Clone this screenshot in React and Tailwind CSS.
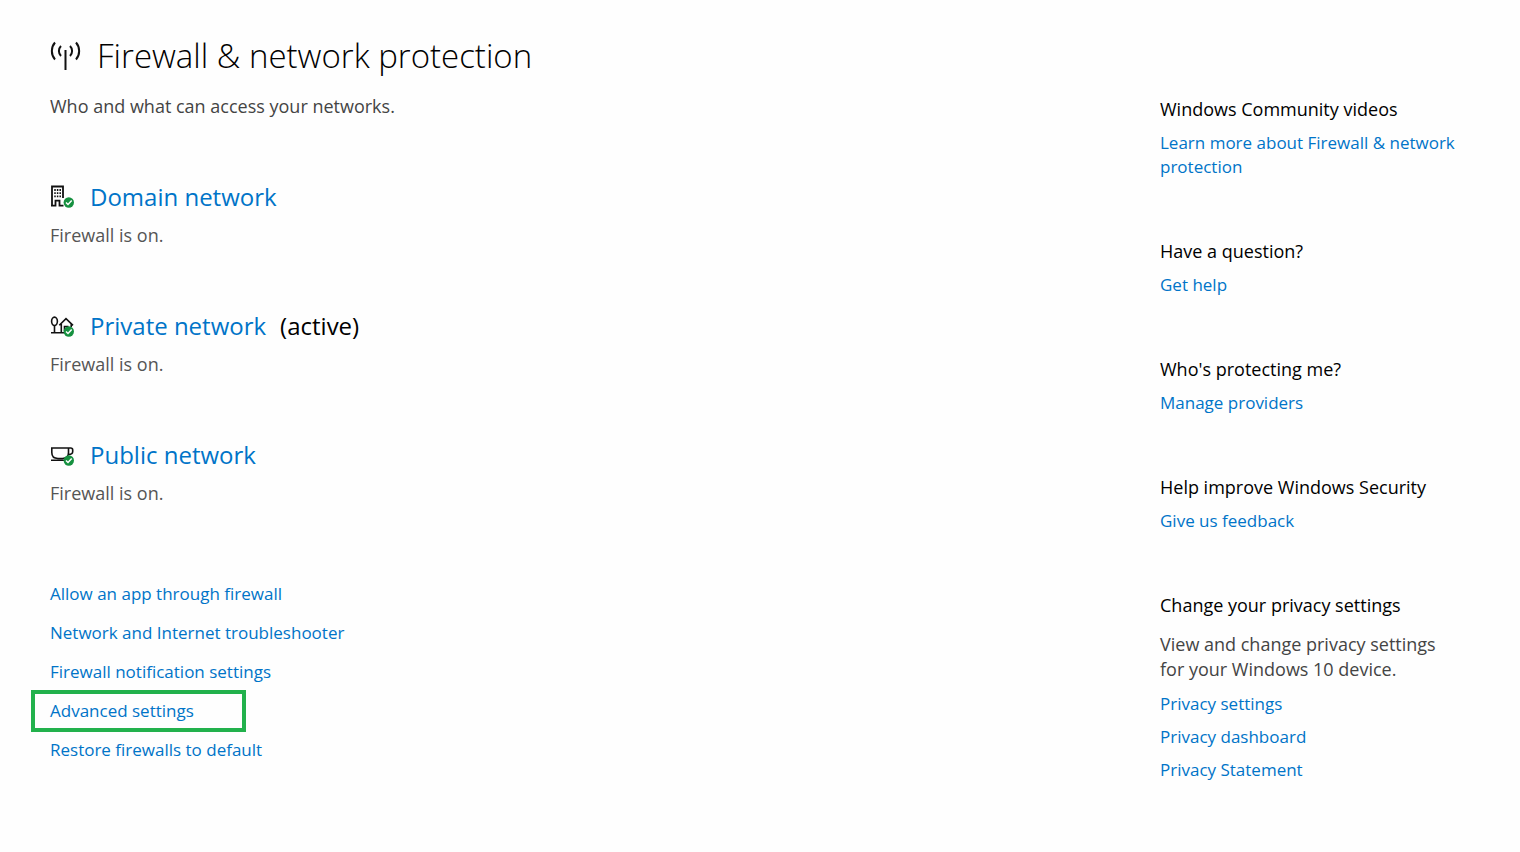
const link = "text-[#0074c8] hover:text-gray-600";

function Check() {
  return (
    <g>
      <circle cx="18.800" cy="17.500" r="5.200" fill="#15903f" stroke="none" />
      <path d="M16 17.500l2 2 3.700-4" fill="none" stroke="#fff" strokeWidth="1.500" />
    </g>
  );
}

function BuildingIcon() {
  return (
    <svg className="size-6" viewBox="0 0 24 24" fill="none" stroke="#111" strokeWidth="1.8" aria-hidden="true">
      <path d="M2 21.500V1.500h11V13M1 20.700h4.500v-5h4v5h4" />
      <path d="M5 4v8.600M7.600 4v8.600M10.200 4v8.600" strokeWidth="1.500" strokeDasharray="1.900 1.300" />
      <Check />
    </svg>
  );
}

function HomeIcon() {
  return (
    <svg className="size-6" viewBox="0 0 24 24" fill="none" stroke="#111" strokeWidth="1.6" aria-hidden="true">
      <path d="M4.500 19v-7.500M1 18.700h14" />
      <ellipse cx="4.500" cy="7.300" rx="2.900" ry="4.200" />
      <path d="M9.300 11.300L16 4.700l7 6.600M11.300 10v8.500M21.200 10v3M14.500 17v-4.500h4" />
      <Check />
    </svg>
  );
}

function CupIcon() {
  return (
    <svg className="size-6" viewBox="0 0 24 24" fill="none" stroke="#111" strokeWidth="1.6" aria-hidden="true">
      <path d="M1.800 5h16.700v4.500c0 4-2.500 6-6 6H8c-3.700 0-6.200-2-6.200-6zM18.500 5h2.200a2 2 0 0 1 2 2v1.500c0 1.800-1.500 3-4.200 3M1 17.300h14" />
      <Check />
    </svg>
  );
}

const networks = [
  { name: "Domain network", Icon: BuildingIcon },
  { name: "Private network", Icon: HomeIcon, active: true },
  { name: "Public network", Icon: CupIcon },
];
const actions = ["Allow an app through firewall", "Network and Internet troubleshooter", "Firewall notification settings", "Advanced settings", "Restore firewalls to default"];
const help = [
  { title: "Windows Community videos", links: ["Learn more about Firewall & network protection"] },
  { title: "Have a question?", links: ["Get help"] },
  { title: "Who's protecting me?", links: ["Manage providers"] },
  { title: "Help improve Windows Security", links: ["Give us feedback"] },
  { title: "Change your privacy settings", text: "View and change privacy settings for your Windows 10 device.", links: ["Privacy settings", "Privacy dashboard", "Privacy Statement"] },
];

export default function App() {
  return (
    <div className="flex min-h-screen justify-between bg-[#fefefe] pl-[50px] pr-[60px] font-['Open_Sans','Noto_Sans',sans-serif] text-[17px] leading-6 text-black">
      <main className="pt-8">
        <h1 className="flex items-center gap-4 text-[33px] leading-[48px] font-light">
          <svg className="h-8 w-[31px]" viewBox="0 0 31 32" fill="none" stroke="#111" strokeWidth="2" aria-hidden="true">
            <path d="M15.500 10v20M11 6a7 7 0 0 0 0 10M20 6a7 7 0 0 1 0 10M5 2.500a13 13 0 0 0 0 17M26 2.500a13 13 0 0 1 0 17" />
          </svg>
          Firewall &amp; network protection
        </h1>
        <p className="mt-[14px] text-lg leading-6 text-[#444]">Who and what can access your networks.</p>
        <div className="mt-[63px] flex flex-col gap-[63px]">
          {networks.map(({ name, Icon, active }) => (
            <section key={name}>
              <h2 className="flex items-center gap-4 text-2xl">
                <Icon />
                <span><a href="#" className={link}>{name}</a>{active && <span className="ml-[14px]">(active)</span>}</span>
              </h2>
              <p className="mt-[10px] text-lg leading-6 text-[#555]">Firewall is on.</p>
            </section>
          ))}
        </div>
        <ul className="mt-[69px]">
          {actions.map((name) => (
            <li key={name} className="flex h-[39px] items-center">
              {name === "Advanced settings" ? (
                <a href="#" className="-ml-[19px] flex h-[42px] w-[215px] shrink-0 items-center border-4 border-[#22b14c] pl-[15px] text-[#0074c8]">{name}</a>
              ) : <a href="#" className={link}>{name}</a>}
            </li>
          ))}
        </ul>
      </main>
      <aside className="flex w-[300px] flex-col gap-[60px] pt-[97px]">
        {help.map(({ title, text, links }) => (
          <section key={title}>
            <h3 className="text-lg leading-6">{title}</h3>
            {text && <p className="mt-[15px] max-w-72 text-lg leading-[25px] text-[#444]">{text}</p>}
            <ul className="mt-[10px] flex flex-col gap-[9px]">
              {links.map((name) => <li key={name}><a href="#" className={link}>{name}</a></li>)}
            </ul>
          </section>
        ))}
      </aside>
    </div>
  );
}
